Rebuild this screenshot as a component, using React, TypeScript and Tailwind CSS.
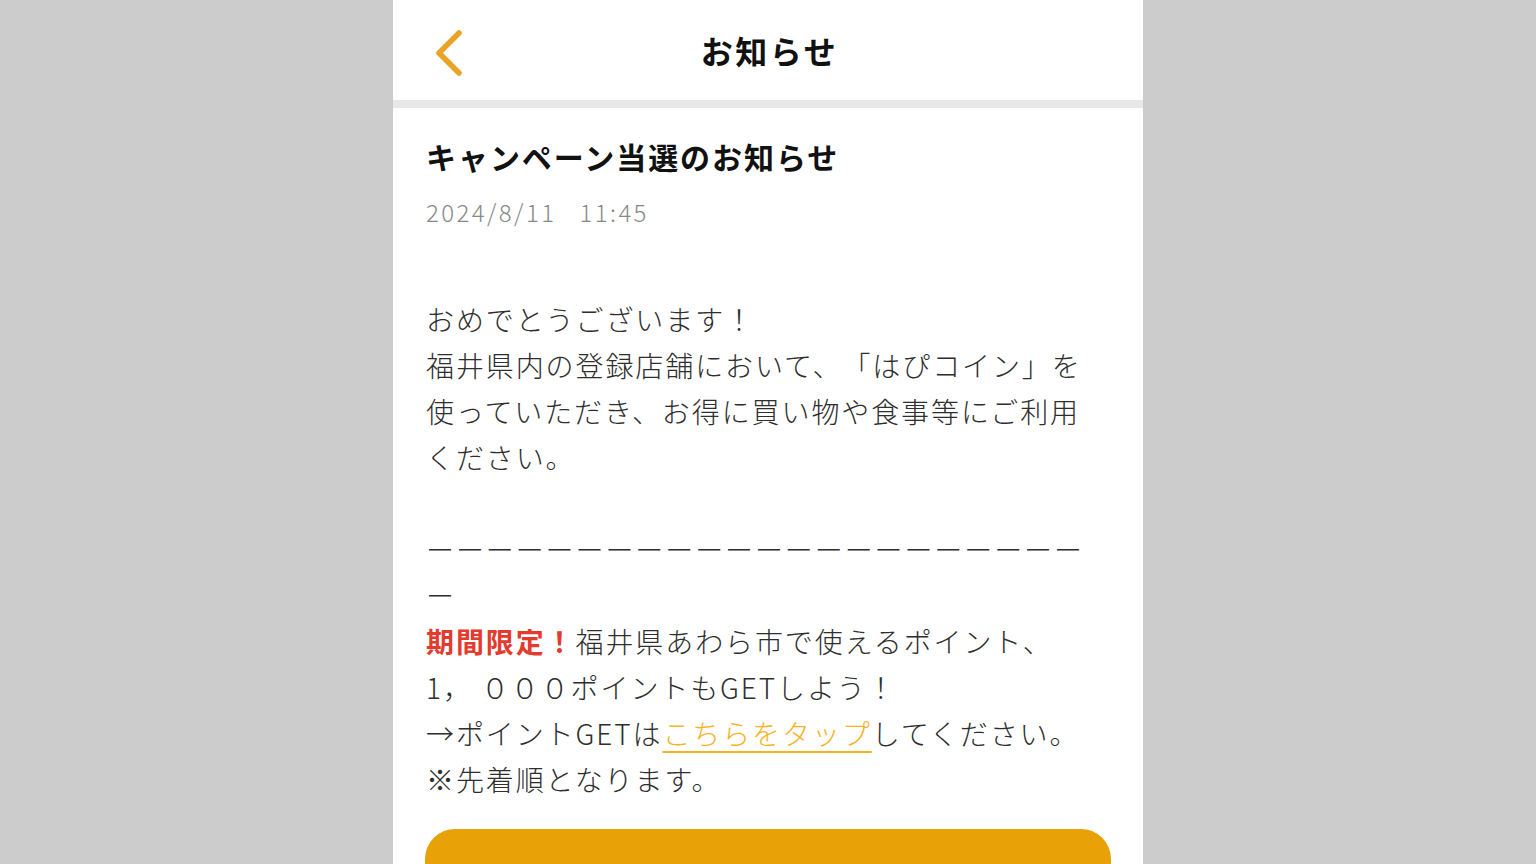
const BackIcon = () => (
  <svg width="36" height="52" viewBox="0 0 36 52" fill="none">
    <path d="M26 6 L6 26 L26 46" stroke="#e9a325" strokeWidth="5.5" strokeLinecap="round" strokeLinejoin="round" />
  </svg>
);

export default function App() {
  return (
    <div className="min-h-screen bg-[#cccccc] flex justify-center font-['Noto_Sans_CJK_JP',sans-serif] [text-spacing-trim:space-all]">
      <div className="w-[750px] min-h-screen bg-white">
        <header className="relative h-[100px] flex items-center justify-center">
          <button className="absolute left-[40px] top-[27px]">
            <BackIcon />
          </button>
          <h1 className="text-[32px] font-bold tracking-[0.08em] text-[#111] pl-[3px]">お知らせ</h1>
        </header>
        <div className="h-[8px] bg-[#e8e8e8]" />

        <article className="px-[32px] pt-[25px]">
          <div className="pl-[1px] pr-[5px]">
            <h2 className="text-[30px] leading-[46px] font-bold tracking-[0.065em] text-[#111]">
              キャンペーン当選のお知らせ
            </h2>
            <p className="mt-[17px] text-[24px] leading-[32px] text-[#888] tracking-[0.1em] font-light">
              2024/8/11&nbsp;&nbsp;&nbsp;11:45
            </p>

            <div className="mt-[68px] text-[28px] leading-[46px] tracking-[0.068em] text-[#2e2e2e] font-light">
              <p>おめでとうございます！</p>
              <p>福井県内の登録店舗において、「はぴコイン」を使っていただき、お得に買い物や食事等にご利用ください。</p>
              <p>&nbsp;</p>
              <p className="break-all">ーーーーーーーーーーーーーーーーーーーーーーー</p>
              <p>
                <span className="font-bold text-[#e33b2e]">期間限定！</span>福井県あわら市で使えるポイント、
              </p>
              <p>1， ０００ポイントもGETしよう！</p>
              <p>
                →ポイントGETは
                <a className="text-[#f7b21f] underline underline-offset-[6px] decoration-[2px]">こちらをタップ</a>
                してください。
              </p>
              <p>※先着順となります。</p>
            </div>
          </div>

          <button className="mt-[27px] w-full h-[96px] rounded-[30px] bg-[#e8a208]" />
        </article>
      </div>
    </div>
  );
}
